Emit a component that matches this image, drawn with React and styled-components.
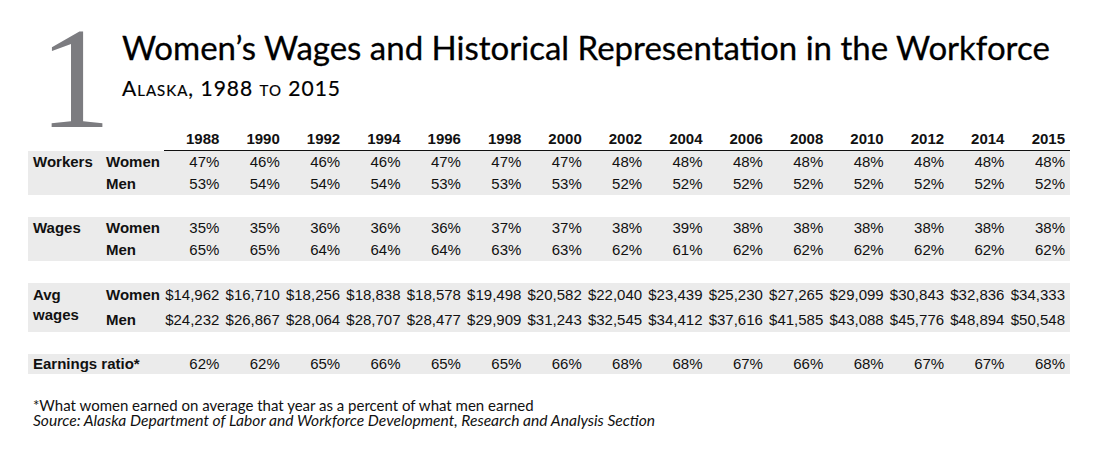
import React from 'react';
import styled, { createGlobalStyle } from 'styled-components';

const GlobalStyle = createGlobalStyle`
  html, body {
    margin: 0;
    padding: 0;
    background: #ffffff;
  }
`;

const YEARS = ['1988', '1990', '1992', '1994', '1996', '1998', '2000', '2002', '2004', '2006', '2008', '2010', '2012', '2014', '2015'];

const GROUPS = [
  {
    label: 'Workers',
    rows: [
      ['Women', ['47%', '46%', '46%', '46%', '47%', '47%', '47%', '48%', '48%', '48%', '48%', '48%', '48%', '48%', '48%']],
      ['Men', ['53%', '54%', '54%', '54%', '53%', '53%', '53%', '52%', '52%', '52%', '52%', '52%', '52%', '52%', '52%']],
    ],
  },
  {
    label: 'Wages',
    rows: [
      ['Women', ['35%', '35%', '36%', '36%', '36%', '37%', '37%', '38%', '39%', '38%', '38%', '38%', '38%', '38%', '38%']],
      ['Men', ['65%', '65%', '64%', '64%', '64%', '63%', '63%', '62%', '61%', '62%', '62%', '62%', '62%', '62%', '62%']],
    ],
  },
  {
    label: 'Avg wages',
    tall: true,
    rows: [
      ['Women', ['$14,962', '$16,710', '$18,256', '$18,838', '$18,578', '$19,498', '$20,582', '$22,040', '$23,439', '$25,230', '$27,265', '$29,099', '$30,843', '$32,836', '$34,333']],
      ['Men', ['$24,232', '$26,867', '$28,064', '$28,707', '$28,477', '$29,909', '$31,243', '$32,545', '$34,412', '$37,616', '$41,585', '$43,088', '$45,776', '$48,894', '$50,548']],
    ],
  },
];

const RATIO = ['62%', '62%', '65%', '66%', '65%', '65%', '66%', '68%', '68%', '67%', '66%', '68%', '67%', '67%', '68%'];

const Page = styled.div`
  width: 1095px;
  height: 473px;
  padding: 0 0 0 28px;
  box-sizing: border-box;
  background: #fff;
  color: #111;
`;

const Header = styled.header`
  display: flex;
  align-items: flex-start;
  height: 128px;
`;

// baseline sits at top + lineHeight/2 + 48.6px for Liberation Serif 144px
const BigNumber = styled.div`
  font-family: 'Liberation Serif', serif;
  font-size: 144px;
  line-height: 98px;
  height: 98px;
  color: #7c7c80;
  margin: 30px 11px 0 11px;
  width: 72px;
`;

const Titles = styled.div`
  display: flex;
  flex-direction: column;
  padding-top: 27px;
`;

const Title = styled.h1`
  margin: 0;
  font-family: Lato, sans-serif;
  font-weight: 400;
  font-size: 33px;
  line-height: 40px;
  color: #000;
  -webkit-text-stroke: 0.3px #000;
`;

const Subtitle = styled.h2`
  margin: 10px 0 0;
  font-family: Lato, sans-serif;
  font-weight: 400;
  font-size: 21px;
  line-height: 22px;
  letter-spacing: 1px;
  font-variant: small-caps;
  color: #000;
  -webkit-text-stroke: 0.2px #000;
`;

const Table = styled.table`
  border-collapse: collapse;
  table-layout: fixed;
  width: 1042px;
  font-family: 'Liberation Sans', Arial, sans-serif;
  font-size: 15px;
  color: #111;
`;

const Row = styled.tr`
  height: ${p => p.$h}px;
  background: ${p => (p.$band ? '#ebebeb' : 'transparent')};
`;

const YearCell = styled.th`
  font-weight: 700;
  text-align: right;
  padding: 0 5px 0 0;
  line-height: 22px;
  border-bottom: 1px solid #111;
`;

const EmptyHead = styled.th`
  padding: 0;
`;

const GroupLabel = styled.th`
  font-weight: 700;
  text-align: left;
  vertical-align: top;
  padding: ${p => (p.$tall ? '2px' : '0')} 4px 0 5px;
  line-height: ${p => (p.$tall ? '20px' : '22px')};
`;

const SubLabel = styled.th`
  font-weight: 700;
  text-align: left;
  padding: 0 0 0 5px;
  line-height: 22px;
  white-space: nowrap;
`;

const Value = styled.td`
  text-align: right;
  padding: 0 5px 0 0;
  line-height: ${p => (p.$short ? '20px' : '22px')};
  white-space: nowrap;
`;

const RatioLabel = styled.th`
  font-weight: 700;
  text-align: left;
  padding: 0 0 0 5px;
  line-height: 20px;
  white-space: nowrap;
`;

const SpacerRow = styled.tr`
  height: 22px;
`;

const Notes = styled.div`
  margin-top: 24px;
  font-family: Lato, sans-serif;
  font-size: 15px;
  line-height: 15px;
  color: #111;
  padding-left: 5px;
`;

const Note = styled.p`
  margin: 0;
  font-style: ${p => (p.$italic ? 'italic' : 'normal')};
  font-size: ${p => (p.$italic ? '15.6px' : '15px')};
`;

export default function App() {
  return (
    <Page>
      <GlobalStyle />
      <Header>
        <BigNumber>1</BigNumber>
        <Titles>
          <Title>Women’s Wages and Historical Representation in the Workforce</Title>
          <Subtitle>Alaska, 1988 to 2015</Subtitle>
        </Titles>
      </Header>
      <Table>
        <colgroup>
          <col style={{ width: 73 }} />
          <col style={{ width: 63 }} />
          {YEARS.map(y => (
            <col key={y} />
          ))}
        </colgroup>
        <thead>
          <Row $h={22}>
            <EmptyHead />
            <EmptyHead />
            {YEARS.map(y => (
              <YearCell key={y}>{y}</YearCell>
            ))}
          </Row>
        </thead>
        <tbody>
          {GROUPS.map(g => (
            <React.Fragment key={g.label}>
              {g.rows.map(([who, vals], ri) => (
                <Row key={who} $band $h={g.tall ? (ri === 0 ? 24 : 25) : 22}>
                  {ri === 0 && (
                    <GroupLabel rowSpan={2} $tall={g.tall}>
                      {g.label}
                    </GroupLabel>
                  )}
                  <SubLabel>{who}</SubLabel>
                  {vals.map((v, i) => (
                    <Value key={i}>{v}</Value>
                  ))}
                </Row>
              ))}
              <SpacerRow>
                <td colSpan={17} />
              </SpacerRow>
            </React.Fragment>
          ))}
          <Row $band $h={20}>
            <RatioLabel colSpan={2}>Earnings ratio*</RatioLabel>
            {RATIO.map((v, i) => (
              <Value key={i} $short>
                {v}
              </Value>
            ))}
          </Row>
        </tbody>
      </Table>
      <Notes>
        <Note>*What women earned on average that year as a percent of what men earned</Note>
        <Note $italic>Source: Alaska Department of Labor and Workforce Development, Research and Analysis Section</Note>
      </Notes>
    </Page>
  );
}
